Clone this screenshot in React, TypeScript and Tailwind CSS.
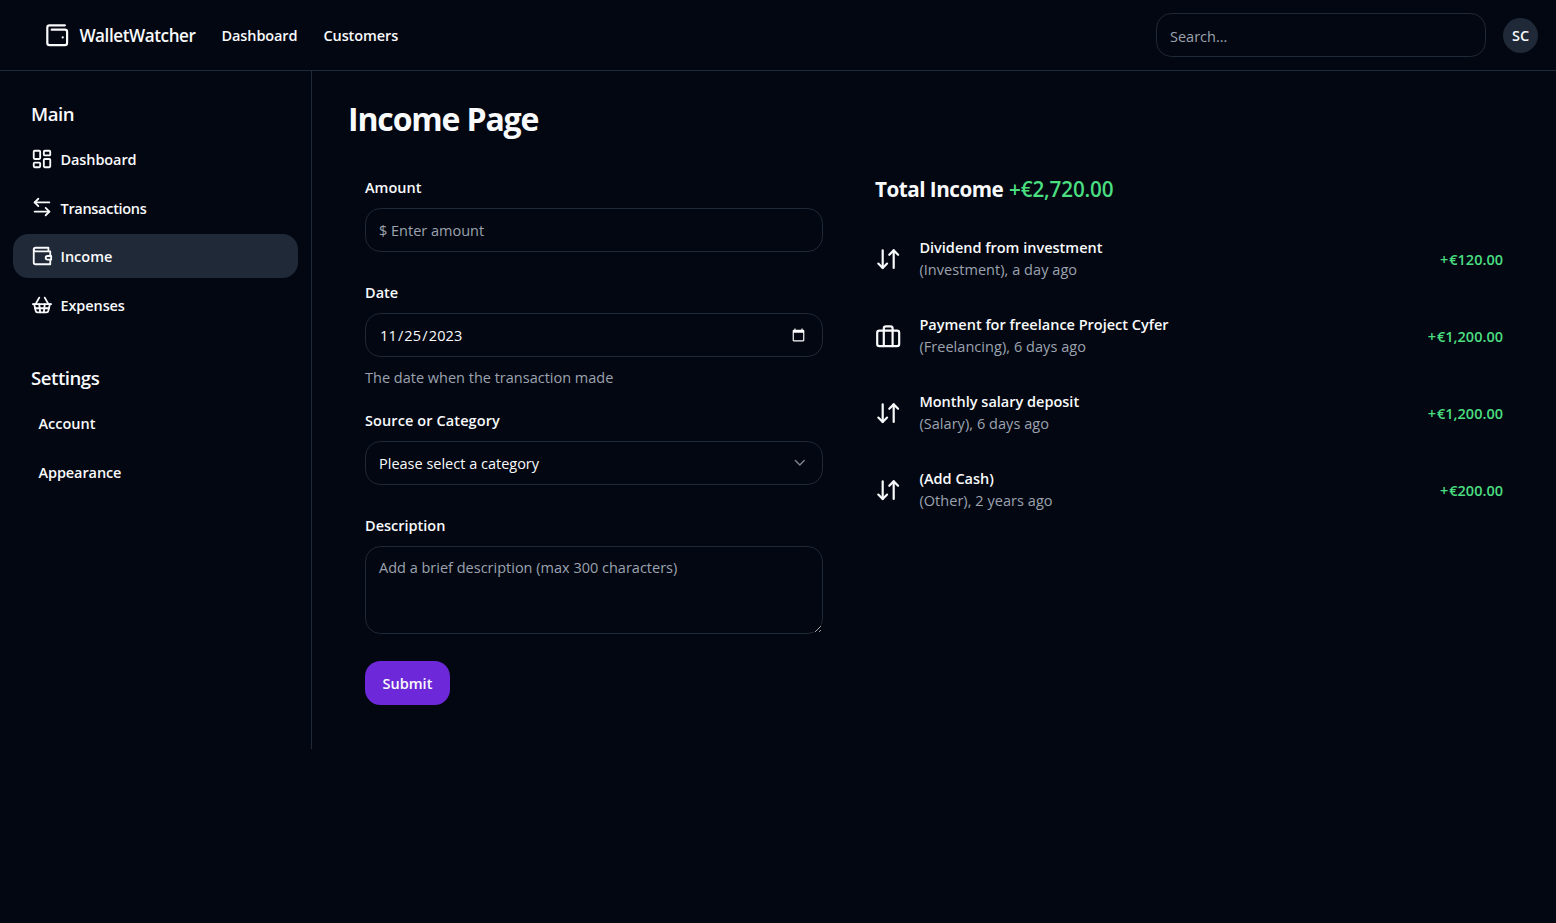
import type { ReactNode } from "react";
import {
  ArrowDownUp,
  ArrowLeftRight,
  ChevronDown,
  LayoutDashboard,
  ShoppingBasket,
} from "lucide-react";

type IconProps = { className?: string };

function Svg({ className, children }: IconProps & { children: ReactNode }) {
  return (
    <svg
      viewBox="0 0 24 24"
      fill="none"
      stroke="currentColor"
      strokeWidth={2}
      strokeLinecap="round"
      strokeLinejoin="round"
      className={className}
    >
      {children}
    </svg>
  );
}

function WalletLogo({ className }: IconProps) {
  return (
    <Svg className={className}>
      <path d="M17 14h.01" />
      <path d="M7 7h12a2 2 0 0 1 2 2v10a2 2 0 0 1-2 2H5a2 2 0 0 1-2-2V5a2 2 0 0 1 2-2h14" />
    </Svg>
  );
}

function WalletIcon({ className }: IconProps) {
  return (
    <Svg className={className}>
      <path d="M21 12V7H5a2 2 0 0 1 0-4h14v4" />
      <path d="M3 5v14a2 2 0 0 0 2 2h16v-5" />
      <path d="M18 12a2 2 0 0 0 0 4h4v-4Z" />
    </Svg>
  );
}

function BriefcaseIcon({ className }: IconProps) {
  return (
    <Svg className={className}>
      <rect width="20" height="14" x="2" y="7" rx="2" ry="2" />
      <path d="M16 21V5a2 2 0 0 0-2-2h-4a2 2 0 0 0-2 2v16" />
    </Svg>
  );
}

const mainLinks = [
  { label: "Dashboard", Icon: LayoutDashboard, active: false, tracking: "tracking-[-0.1px]" },
  { label: "Transactions", Icon: ArrowLeftRight, active: false, tracking: "tracking-[-0.3px]" },
  { label: "Income", Icon: WalletIcon, active: true, tracking: "tracking-normal" },
  { label: "Expenses", Icon: ShoppingBasket, active: false, tracking: "tracking-[-0.1px]" },
];

const incomes = [
  { title: "Dividend from investment", meta: "(Investment), a day ago", amount: "120.00", Icon: ArrowDownUp },
  { title: "Payment for freelance Project Cyfer", meta: "(Freelancing), 6 days ago", amount: "1,200.00", Icon: BriefcaseIcon },
  { title: "Monthly salary deposit", meta: "(Salary), 6 days ago", amount: "1,200.00", Icon: ArrowDownUp },
  { title: "(Add Cash)", meta: "(Other), 2 years ago", amount: "200.00", Icon: ArrowDownUp },
];

const field =
  "block w-full rounded-[15.4px] border border-[#1f2937] bg-transparent px-[13px] outline-none placeholder:text-[#9ca3af]";

function Header() {
  return (
    <header className="flex h-[71px] items-center border-b border-[#1f2937] pr-[18px] pl-[44px]">
      <WalletLogo className="size-[26.4px]" />
      <span className="ml-[9px] pt-[1px] text-[17.1px] font-semibold tracking-tight">WalletWatcher</span>
      <nav className="ml-[26px] flex gap-[26px] pt-[2px] font-semibold tracking-[-0.1px]">
        <a>Dashboard</a>
        <a>Customers</a>
      </nav>
      <input className={`${field} ml-auto h-[44px] max-w-[330px] pt-[2px]`} placeholder="Search..." />
      <div className="ml-[17px] flex size-[35px] items-center justify-center rounded-full bg-[#1f2937] pt-[1px] font-semibold">
        SC
      </div>
    </header>
  );
}

function Sidebar() {
  return (
    <aside className="h-[678px] w-[312px] shrink-0 border-r border-[#1f2937] px-[13px] pt-[29px]">
      <h2 className="pl-[18px] text-[18.6px] leading-[27px] font-semibold tracking-tight">Main</h2>
      <nav className="mt-[9.5px] flex flex-col gap-[4.9px] font-semibold">
        {mainLinks.map(({ label, Icon, active, tracking }) => (
          <a
            key={label}
            className={`flex h-[44px] items-center rounded-[15.4px] pl-[17.6px] ${active ? "bg-[#1f2937]" : ""}`}
          >
            <Icon className="mr-[7.9px] size-[22px]" />
            <span className={`pt-[2.3px] ${tracking}`}>{label}</span>
          </a>
        ))}
      </nav>
      <h2 className="mt-[36.8px] pl-[18px] text-[18.6px] leading-[27px] font-semibold tracking-tight">Settings</h2>
      <nav className="mt-[10.9px] flex flex-col gap-[4.9px] font-semibold">
        <a className="flex h-[44px] items-center pl-[25.5px]">Account</a>
        <a className="flex h-[44px] items-center pl-[25.5px] tracking-[-0.1px]">Appearance</a>
      </nav>
    </aside>
  );
}

function IncomeForm() {
  return (
    <form className="w-[458px] shrink-0">
      <label className="block h-[31px] font-semibold">Amount</label>
      <input className={`${field} h-[44px]`} placeholder="$ Enter amount" />
      <label className="mt-[30px] block h-[31px] font-semibold">Date</label>
      <input
        type="date"
        defaultValue="2023-11-25"
        className={`${field} h-[44px] pt-[2px] pr-[14px] tracking-[0.15px] scheme-dark [&::-webkit-calendar-picker-indicator]:mb-[1px] [&::-webkit-calendar-picker-indicator]:text-[15.4px]`}
      />
      <p className="mt-[10px] text-[#9ca3af]">The date when the transaction made</p>
      <label className="mt-[21px] block h-[31px] font-semibold tracking-[0.1px]">Source or Category</label>
      <button type="button" className={`${field} flex! h-[44px] items-center justify-between`}>
        <span className="pt-[2px]">Please select a category</span>
        <ChevronDown className="size-[17.6px] opacity-50" />
      </button>
      <label className="mt-[30px] block h-[31px] font-semibold">Description</label>
      <textarea
        className={`${field} h-[88px] resize-y pt-[10px] pb-[8px] scheme-dark`}
        placeholder="Add a brief description (max 300 characters)"
      />
      <button
        type="button"
        className="mt-[27px] flex h-[44px] w-[85px] items-center justify-center rounded-[15.4px] bg-[#6d28d9] pt-[2px] font-semibold"
      >
        Submit
      </button>
    </form>
  );
}

function IncomeList() {
  return (
    <section className="-mt-px ml-[52px] w-[628px]">
      <h2 className="text-[20.7px] leading-[26px] font-bold tracking-tight">
        Total Income{" "}
        <span className="ml-px font-semibold tracking-[-0.15px] text-[#4ade80]">+€2,720.00</span>
      </h2>
      <ul className="mt-[35px] flex flex-col gap-[33px]">
        {incomes.map(({ title, meta, amount, Icon }) => (
          <li key={title} className="flex h-[44px] items-center">
            <Icon className="size-[26.4px]" />
            <div className="ml-[18px] flex flex-col leading-[22px]">
              <span className="font-semibold">{title}</span>
              <span className="tracking-[0.05px] text-[#9ca3af]">{meta}</span>
            </div>
            <span className="ml-auto pt-[2px] font-semibold text-[#4ade80]">
              <span className="tracking-[1px]">+</span>€{amount}
            </span>
          </li>
        ))}
      </ul>
    </section>
  );
}

export default function App() {
  return (
    <div className="min-h-screen bg-[#030712] font-['Open_Sans','Noto_Sans',sans-serif] text-[14.5px] leading-[22px] text-[#f9fafb]">
      <Header />
      <div className="flex">
        <Sidebar />
        <main className="pt-[28px] pl-[36px]">
          <h1 className="text-[32px] leading-[40px] font-bold tracking-[-1.15px]">Income Page</h1>
          <div className="mt-[38px] flex pl-[17px]">
            <IncomeForm />
            <IncomeList />
          </div>
        </main>
      </div>
    </div>
  );
}
